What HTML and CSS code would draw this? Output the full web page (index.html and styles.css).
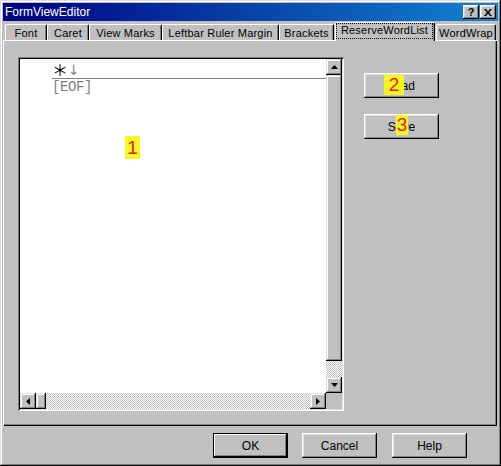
FILE: index.html
```html
<!DOCTYPE html>
<html>
<head>
<meta charset="utf-8">
<title>FormViewEditor</title>
<link rel="stylesheet" href="styles.css">
</head>
<body>
<div class="window">
  <div class="titlebar">
    <span class="title">FormViewEditor</span>
    <div class="tb-buttons">
      <span class="tb-btn help-btn">?</span>
      <span class="tb-btn close-btn"><svg width="8" height="7" viewBox="0 0 8 7"><path d="M0 0h2l2 2.5L6 0h2L5 3.5 8 7H6L4 4.5 2 7H0l3-3.5z" fill="#000"/></svg></span>
    </div>
  </div>
  <div class="tabs">
    <div class="tab t-font">Font</div>
    <div class="tab t-caret">Caret</div>
    <div class="tab t-vm">View Marks</div>
    <div class="tab t-lrm">Leftbar Ruler Margin</div>
    <div class="tab t-br">Brackets</div>
    <div class="tab active t-rw"><span class="focus">ReserveWordList</span></div>
    <div class="tab t-ww">WordWrap</div>
  </div>
  <div class="panel">
    <div class="edit">
      <div class="edit-text">
        <div class="line1"><span class="ast">＊</span><span class="arrow">↓</span></div>
        <div class="eof">[EOF]</div>
        <span class="badge b1">1</span>
      </div>
      <div class="vscroll">
        <div class="sbtn"><svg width="7" height="4" viewBox="0 0 7 4"><path d="M3.5 0L7 4H0z" fill="#000"/></svg></div>
        <div class="vthumb"></div>
        <div class="track"></div>
        <div class="sbtn"><svg width="7" height="4" viewBox="0 0 7 4"><path d="M0 0h7L3.5 4z" fill="#000"/></svg></div>
      </div>
      <div class="hscroll">
        <div class="sbtn"><svg width="4" height="7" viewBox="0 0 4 7"><path d="M4 0v7L0 3.5z" fill="#000"/></svg></div>
        <div class="hthumb"></div>
        <div class="track"></div>
        <div class="sbtn"><svg width="4" height="7" viewBox="0 0 4 7"><path d="M0 0l4 3.5L0 7z" fill="#000"/></svg></div>
      </div>
      <div class="corner"></div>
    </div>
    <div class="side">
      <div class="btn">Load<span class="badge b2">2</span></div>
      <div class="btn">Save<span class="badge b3">3</span></div>
    </div>
  </div>
  <div class="footer">
    <div class="btn default">OK</div>
    <div class="btn">Cancel</div>
    <div class="btn btn-help">Help</div>
  </div>
</div>
</body>
</html>
```
FILE: styles.css
```css
* { box-sizing: border-box; }
html, body { margin: 0; padding: 0; }
body {
  background: #c0c0c0;
  font-family: "Liberation Sans", Arial, sans-serif;
  font-size: 12px;
  color: #000;
}
.window {
  width: 501px;
  height: 466px;
  padding: 3px;
  background: #c0c0c0;
  box-shadow: inset -1px -1px #000, inset 1px 1px #dfdfdf, inset -2px -2px #808080, inset 2px 2px #fff;
  display: flex;
  flex-direction: column;
}
.titlebar {
  height: 18px;
  flex: 0 0 18px;
  background: linear-gradient(to right, #000080, #1084d0);
  display: flex;
  align-items: center;
  justify-content: space-between;
  padding: 0 2px 0 2px;
  color: #fff;
}
.title { font-size: 12px; line-height: 14px; }
.tb-buttons { display: flex; gap: 1px; }
.tb-btn {
  width: 16px;
  height: 14px;
  background: #c0c0c0;
  box-shadow: inset -1px -1px #000, inset 1px 1px #fff, inset -2px -2px #808080, inset 2px 2px #dfdfdf;
  display: flex;
  align-items: center;
  justify-content: center;
  color: #000;
  font-weight: bold;
  font-size: 11px;
  line-height: 12px;
}
.tabs {
  display: flex;
  align-items: flex-end;
  height: 18px;
  flex: 0 0 18px;
  margin-top: 1px;
  padding-left: 2px;
  position: relative;
  z-index: 1;
}
.tab {
  height: 16px;
  border-top: 1px solid #fff;
  border-left: 1px solid #fff;
  border-right: 1px solid #000;
  border-top-left-radius: 2px;
  border-top-right-radius: 2px;
  box-shadow: inset -1px 0 #808080;
  padding-top: 1px;
  line-height: 14px;
  text-align: center;
  white-space: nowrap;
  font-size: 11px;
  letter-spacing: 0.2px;
}
.t-font { width: 42px; }
.t-caret { width: 42px; }
.t-vm { width: 73px; }
.t-lrm { width: 117px; }
.t-br { width: 55px; }
.t-rw { width: 100px; margin-left: 1px; }
.t-ww { width: 60px; margin-left: 1px; }
.tab.active {
  height: 19px;
  margin-bottom: -1px;
  padding-top: 0;
  background: #c0c0c0;
}
.focus {
  display: block;
  border: 1px dotted #000;
  height: 16px;
  margin-right: 1px;
  line-height: 13px;
}
.panel {
  height: 386px;
  flex: 0 0 386px;
  margin-right: 1px;
  box-shadow: inset 1px 1px #fff, inset -1px -1px #000, inset -2px -2px #808080;
  display: flex;
  align-items: flex-start;
  padding: 17px 0 0 15px;
}
.edit {
  width: 326px;
  height: 354px;
  padding: 2px;
  box-shadow: inset 1px 1px #808080, inset -1px -1px #fff, inset 2px 2px #000, inset -2px -2px #dfdfdf;
  display: grid;
  grid-template-columns: 1fr 16px;
  grid-template-rows: 1fr 16px;
}
.edit-text {
  background: #fff;
  position: relative;
  padding-top: 1px;
  overflow: hidden;
}
.line1 {
  margin-left: 32px;
  height: 19px;
  border-bottom: 1px solid #808080;
  display: flex;
  align-items: center;
}
.ast {
  display: inline-block;
  width: 16px;
  font-family: "Noto Sans CJK JP", "DejaVu Sans", sans-serif;
  font-size: 16px;
  line-height: 16px;
  color: #000;
}
.arrow {
  display: inline-block;
  width: 8px;
  font-family: "DejaVu Sans", sans-serif;
  font-size: 14px;
  line-height: 16px;
  color: #808080;
  margin-top: 1px;
}
.eof {
  margin-left: 32px;
  font-family: "Liberation Mono", "DejaVu Sans Mono", monospace;
  font-size: 14px;
  letter-spacing: -0.4px;
  line-height: 16px;
  color: #808080;
}
.vscroll { display: flex; flex-direction: column; }
.hscroll { display: flex; }
.sbtn {
  width: 16px;
  height: 16px;
  flex: 0 0 16px;
  background: #c0c0c0;
  box-shadow: inset -1px -1px #000, inset 1px 1px #dfdfdf, inset -2px -2px #808080, inset 2px 2px #fff;
  display: flex;
  align-items: center;
  justify-content: center;
}
.sbtn svg { display: block; }
.vthumb, .hthumb {
  background: #c0c0c0;
  box-shadow: inset -1px -1px #000, inset 1px 1px #dfdfdf, inset -2px -2px #808080, inset 2px 2px #fff;
}
.vthumb { flex: 0 0 286px; }
.hthumb { flex: 0 0 10px; }
.track {
  flex: 1;
  background: repeating-conic-gradient(#c0c0c0 0 25%, #fff 0 50%) 0 0 / 2px 2px;
}
.corner { background: #c0c0c0; }
.side {
  display: flex;
  flex-direction: column;
  gap: 16px;
  margin-left: 20px;
  margin-top: 16px;
}
.btn {
  width: 75px;
  height: 25px;
  background: #c0c0c0;
  box-shadow: inset -1px -1px #000, inset 1px 1px #fff, inset -2px -2px #808080, inset 2px 2px #dfdfdf;
  display: flex;
  align-items: center;
  justify-content: center;
  position: relative;
  font-size: 12px;
}
.btn.default {
  box-shadow: inset 0 0 0 1px #000, inset -2px -2px #000, inset 2px 2px #fff, inset -3px -3px #808080;
}
.footer {
  display: flex;
  gap: 14px;
  margin-top: 7px;
  padding-left: 210px;
}
.btn-help { margin-left: 1px; }
.badge {
  position: absolute;
  background: #f8f820;
  color: #f01818;
  font-family: "Liberation Sans", Arial, sans-serif;
  text-align: center;
}
.b1 {
  left: 105px;
  top: 77px;
  width: 15px;
  height: 23px;
  font-size: 19px;
  line-height: 23px;
}
.b2 {
  left: 20px;
  top: 2px;
  width: 20px;
  height: 20px;
  font-size: 19px;
  line-height: 20px;
}
.b3 {
  left: 32px;
  top: 1px;
  width: 12px;
  height: 20px;
  font-size: 19px;
  line-height: 20px;
}
```
